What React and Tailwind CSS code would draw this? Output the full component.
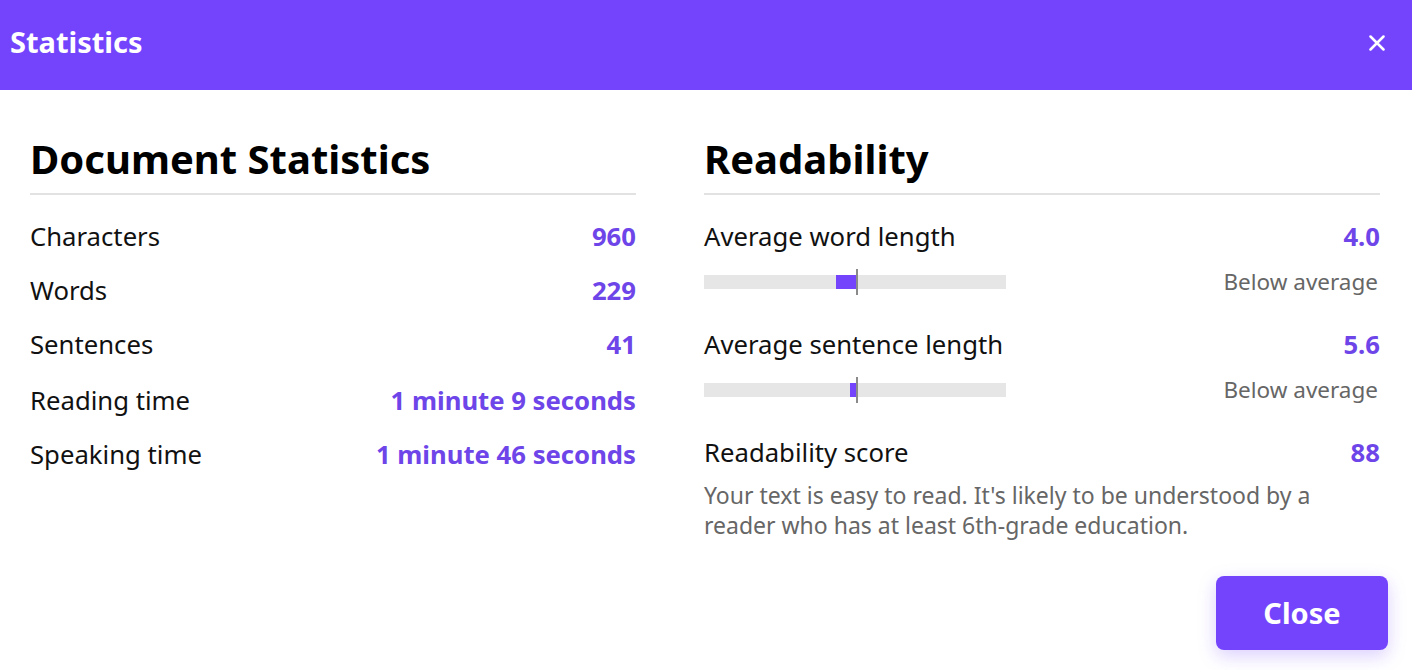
import { useState } from 'react';

const docStats = [
  { label: 'Characters', value: '960' },
  { label: 'Words', value: '229' },
  { label: 'Sentences', value: '41' },
  { label: 'Reading time', value: '1 minute 9 seconds', shift: true },
  { label: 'Speaking time', value: '1 minute 46 seconds' },
];

const metrics = [
  { label: 'Average word length', value: '4.0', fillLeft: 132, fillWidth: 20, note: 'Below average' },
  { label: 'Average sentence length', value: '5.6', fillLeft: 146, fillWidth: 6, note: 'Below average' },
];

function ScaleBar({ fillLeft, fillWidth }) {
  return (
    <div className="relative w-[302px] h-[14px] bg-[#e6e6e6]">
      <div className="absolute top-0 h-[14px] bg-[#7444fd]" style={{ left: fillLeft, width: fillWidth }} />
      <div className="absolute left-[152px] top-[-6px] w-[2px] h-[26px] bg-[#8a8a8a]" />
    </div>
  );
}

function StatRow({ label, value, shift }) {
  return (
    <div className={`flex items-center justify-between h-[54px] ${shift ? 'mt-[2px]' : ''}`}>
      <span className="text-[25.7px] text-[#111]">{label}</span>
      <span className="text-[25.7px] font-bold text-[#6d45e8]">{value}</span>
    </div>
  );
}

export default function App() {
  const [open, setOpen] = useState(true);

  return (
    <div className="w-full h-[670px] bg-white flex flex-col font-['Noto_Sans',sans-serif]">
      <div className="h-[90px] shrink-0 bg-[#7444fd] flex items-center justify-between pl-[10px] pr-[27px] pb-[6px]">
        <h1 className="text-[29px] font-bold text-white">Statistics</h1>
        <button onClick={() => setOpen(!open)} aria-label="Close" className="w-4 h-4 flex items-center justify-center mt-[2px]">
          <svg width="16" height="16" viewBox="0 0 16 16" fill="none" stroke="white" strokeWidth="2.5" strokeLinecap="round">
            <path d="M1.5 1.5L14.5 14.5M14.5 1.5L1.5 14.5" />
          </svg>
        </button>
      </div>

      <div className="grid grid-cols-[606px_676px] gap-x-[68px] pl-[30px] pt-[45px]">
        <section>
          <h2 className="text-[40px] leading-[48px] font-bold text-black pb-[10px] border-b-2 border-[#e2e2e2]">
            Document Statistics
          </h2>
          <div className="pt-[15px]">
            {docStats.map((s) => (
              <StatRow key={s.label} {...s} />
            ))}
          </div>
        </section>

        <section>
          <h2 className="text-[40px] leading-[48px] font-bold text-black pb-[10px] border-b-2 border-[#e2e2e2]">
            Readability
          </h2>
          <div className="pt-[15px]">
            {metrics.map((m) => (
              <div key={m.label}>
                <StatRow label={m.label} value={m.value} />
                <div className="flex items-center justify-between h-[30px] mt-[3px] mb-[21px]">
                  <ScaleBar fillLeft={m.fillLeft} fillWidth={m.fillWidth} />
                  <span className="text-[22.5px] text-[#666] pr-[2px]">{m.note}</span>
                </div>
              </div>
            ))}
            <StatRow label="Readability score" value="88" />
            <p className="text-[23px] leading-[30px] text-[#666]">
              Your text is easy to read. It's likely to be understood by a reader who has at least 6th-grade education.
            </p>
          </div>
        </section>
      </div>

      <div className="flex justify-end pr-[24px] pt-[36px]">
        <button className="w-[172px] h-[74px] rounded-[8px] bg-[#7444fd] text-white text-[29px] font-bold shadow-[0_6px_18px_rgba(116,68,253,0.25)]">
          Close
        </button>
      </div>
    </div>
  );
}
